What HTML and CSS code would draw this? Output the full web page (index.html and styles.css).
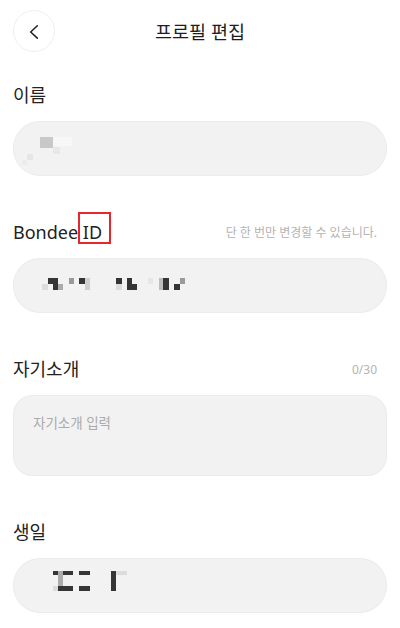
FILE: index.html
```html
<!DOCTYPE html>
<html lang="ko">
<head>
<meta charset="utf-8">
<title>프로필 편집</title>
<link rel="stylesheet" href="styles.css">
</head>
<body>
<div class="page">
  <header class="topbar">
    <button class="back" type="button" aria-label="뒤로">
      <svg width="42" height="42" viewBox="0 0 42 42"><path d="M24.5 15.5 L17.5 22 L24.5 28.5" fill="none" stroke="#222" stroke-width="1.6" stroke-linecap="round" stroke-linejoin="round"/></svg>
    </button>
    <h1 class="title">프로필 편집</h1>
    <span class="spacer"></span>
  </header>

  <section class="section first">
    <div class="label-row"><span class="label">이름</span></div>
    <div class="field">
      <svg class="mosaic" width="374" height="55" viewBox="0 0 374 55">
        <rect x="27" y="16" width="13" height="11" fill="#c8c8c8"/>
        <rect x="40" y="16" width="19" height="9" fill="#f7f7f7"/>
        <rect x="40" y="26" width="7" height="7" fill="#e8e8e8"/>
        <rect x="14" y="33" width="6" height="6" fill="#e6e6e6"/>
        <rect x="9" y="39" width="5" height="5" fill="#ececec"/>
      </svg>
    </div>
  </section>

  <section class="section">
    <div class="label-row">
      <span class="label">Bondee <span class="marked">ID</span></span>
      <span class="hint">단 한 번만 변경할 수 있습니다.</span>
    </div>
    <div class="field">
      <svg class="mosaic" width="374" height="55" viewBox="0 0 374 55">
        <rect x="29" y="26" width="6" height="6" fill="#dcdcdc"/>
        <rect x="35" y="20" width="5" height="6" fill="#353535"/>
        <rect x="40" y="20" width="5" height="12" fill="#353535"/>
        <rect x="45" y="26" width="5" height="6" fill="#ababab"/>
        <rect x="56" y="20" width="5" height="6" fill="#9a9a9a"/>
        <rect x="66" y="20" width="6" height="6" fill="#353535"/>
        <rect x="72" y="20" width="5" height="12" fill="#cfcfcf"/>
        <rect x="103" y="20" width="6" height="6" fill="#353535"/>
        <rect x="103" y="26" width="6" height="6" fill="#dcdcdc"/>
        <rect x="114" y="20" width="5" height="6" fill="#353535"/>
        <rect x="114" y="26" width="10" height="6" fill="#353535"/>
        <rect x="135" y="20" width="5" height="6" fill="#e6e6e6"/>
        <rect x="146" y="20" width="4" height="12" fill="#bdbdbd"/>
        <rect x="150" y="20" width="6" height="12" fill="#353535"/>
        <rect x="161" y="26" width="6" height="6" fill="#353535"/>
        <rect x="167" y="20" width="5" height="6" fill="#9a9a9a"/>
      </svg>
    </div>
  </section>

  <section class="section">
    <div class="label-row">
      <span class="label">자기소개</span>
      <span class="count">0/30</span>
    </div>
    <div class="field area">
      <span class="placeholder">자기소개 입력</span>
    </div>
  </section>

  <section class="section">
    <div class="label-row"><span class="label">생일</span></div>
    <div class="field">
      <svg class="mosaic" width="374" height="55" viewBox="0 0 374 55">
        <rect x="40" y="13" width="5" height="4" fill="#353535"/>
        <rect x="50" y="13" width="10" height="4" fill="#353535"/>
        <rect x="45" y="13" width="5" height="15" fill="#ababab"/>
        <rect x="40" y="28" width="5" height="5" fill="#dcdcdc"/>
        <rect x="45" y="28" width="15" height="5" fill="#353535"/>
        <rect x="66" y="13" width="11" height="4" fill="#353535"/>
        <rect x="66" y="28" width="11" height="5" fill="#353535"/>
        <rect x="98" y="13" width="5" height="20" fill="#353535"/>
        <rect x="103" y="13" width="11" height="4" fill="#dcdcdc"/>
      </svg>
    </div>
  </section>
</div>
</body>
</html>
```

FILE: styles.css
```css
*, *::before, *::after { box-sizing: border-box; }

html, body {
  margin: 0;
  padding: 0;
  background: #ffffff;
}

body {
  font-family: "Noto Sans", "Noto Sans CJK KR", sans-serif;
  color: #222222;
}

.page {
  padding: 0 13px;
}

.topbar {
  height: 62px;
  display: grid;
  grid-template-columns: 42px 1fr 42px;
  align-items: start;
}

.back {
  margin-top: 10px;
  width: 42px;
  height: 42px;
  padding: 0;
  border: 1px solid #efefef;
  border-radius: 50%;
  background: #ffffff;
  display: flex;
  align-items: center;
  justify-content: center;
}

.back svg { display: block; }

.title {
  margin: 0;
  padding-top: 19px;
  text-align: center;
  font-size: 18.5px;
  line-height: 26px;
  font-weight: 400;
  color: #1e1e1e;
}

.section { margin-top: 44px; }
.section.first { margin-top: 21px; }

.label-row {
  height: 24px;
  display: flex;
  align-items: center;
  justify-content: space-between;
  padding-right: 10px;
}

.label {
  font-size: 18px;
  line-height: 24px;
  color: #222222;
}

.marked {
  position: relative;
}

.marked::after {
  content: "";
  position: absolute;
  left: -5px;
  top: -8px;
  width: 33px;
  height: 32px;
  border: 2px solid #e8262c;
}

.hint {
  font-size: 12px;
  color: #b3b3b3;
}

.count {
  font-size: 12px;
  color: #b3b3b3;
}

.field {
  margin-top: 14px;
  height: 55px;
  border-radius: 28px;
  background: #f2f2f2;
  box-shadow: 0 0 0 1px #ececec inset;
  overflow: hidden;
}

.mosaic { display: block; }

.field.area {
  height: 81px;
  border-radius: 20px;
  padding-top: 18px;
  padding-left: 20px;
  padding-right: 20px;
}

.placeholder {
  display: block;
  font-size: 13.5px;
  line-height: 20px;
  color: #ababab;
}
```
